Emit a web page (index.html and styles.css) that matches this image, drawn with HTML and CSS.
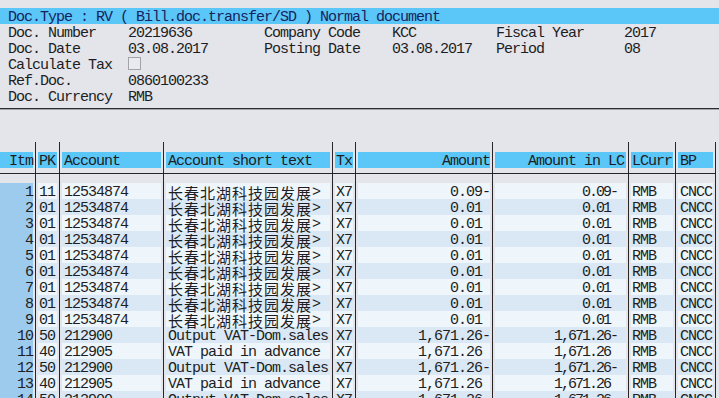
FILE: index.html
```html
<!DOCTYPE html>
<html lang="en">
<head>
    <meta charset="UTF-8">
    <title>Display Document: Data Entry View</title>

    <link rel="stylesheet" href="styles.css">
</head>
<body>

<div class="docHead">
    <div class="docHead__title">Doc.Type : RV ( Bill.doc.transfer/SD ) Normal document</div>
    <div class="docHead__grid">
        <span>Doc. Number</span><span>20219636</span><span>Company Code</span><span>KCC</span><span>Fiscal Year</span><span>2017</span>
        <span>Doc. Date</span><span>03.08.2017</span><span>Posting Date</span><span>03.08.2017</span><span>Period</span><span>08</span>
        <span>Calculate Tax</span><span class="docHead__wide"><i class="check"></i></span>
        <span>Ref.Doc.</span><span class="docHead__wide">0860100233</span>
        <span>Doc. Currency</span><span class="docHead__wide">RMB</span>
    </div>
</div>
<hr class="divider">

<div class="items"></div>

<script>
    window.onload = function () {

        const columns = ['itm', 'pk', 'acct', 'short', 'tx', 'amt', 'lc', 'curr', 'bp'];
        const titles = ['Itm', 'PK', 'Account', 'Account short text', 'Tx', 'Amount', 'Amount in LC', 'LCurr', 'BP'];
        const park = '<span class="zh">长春北湖科技园发展</span>&gt;';

        //строки документа
        let rows = [];
        for (let i = 1; i <= 14; i++) {
            let line;
            if (i === 1) {
                line = ['11', '12534874', park, '0.09-'];
            } else if (i < 10) {
                line = ['01', '12534874', park, '0.01 '];
            } else if (i % 2 === 0) {
                line = ['50', '212900', 'Output VAT-Dom.sales', '1,671.26-'];
            } else {
                line = ['40', '212905', 'VAT paid in advance', '1,671.26 '];
            }
            rows.push([i, line[0], line[1], line[2], 'X7', line[3], line[3], 'RMB', 'CNCC']);
        }

        let html = '';
        columns.forEach(function (name, c) {
            html += '<div class="col col--' + name + '">';
            html += '<div class="col__head">' + titles[c] + '</div><div class="col__rule"></div>';
            rows.forEach(function (row) {
                html += '<div class="cell">' + row[c] + '</div>';
            });
            html += '</div>';
        });

        document.querySelector('.items').innerHTML = html;
    }
</script>

</body>
</html>
```

FILE: styles.css
```css
html{
    overflow: hidden;
}
body{
    margin: 0;
    background-color: #e4e4eb;
    font-family: "Liberation Mono", monospace;
    font-size: 15px;
    letter-spacing: -1px;
    line-height: 16px;
    color: #1d1d24;
}
.docHead{
    padding-top: 8px;
}
.docHead__title{
    box-sizing: border-box;
    height: 16px;
    padding: 2px 0 0 8px;
    background-color: #5ac7f8;
    color: #17235f;
    white-space: pre;
}
.docHead__grid{
    display: grid;
    grid-template-columns: 120px 136px 128px 104px 128px 1fr;
    grid-auto-rows: 16px;
    padding-left: 8px;
    white-space: pre;
}
.docHead__grid span{
    padding-top: 2px;
}
.docHead__wide{
    grid-column: span 5;
}
.check{
    display: block;
    width: 11px;
    height: 11px;
    margin-top: -1px;
    border: 1px solid #a2a2aa;
    background-color: #e9e9ee;
}
.divider{
    margin: 4px 0 0;
    border: none;
    border-top: 1px solid #2b2b30;
    border-bottom: 1px solid #a4a4ac;
}
.items{
    display: flex;
    margin-top: 32px;
}
.col{
    flex: none;
    padding: 10px 2px 0;
    border-right: 1px solid #26262b;
}
.col:first-child{
    padding-left: 0;
}
.col__head,
.cell{
    box-sizing: border-box;
    height: 16px;
    padding-top: 2px;
    white-space: pre;
}
.col__head{
    background-color: #5ac7f8;
}
.col__rule{
    height: 1px;
    margin: 5px -3px 9px -2px;
    background-color: #26262b;
}
.col:first-child .col__rule{
    margin-left: 0;
}
.cell{
    background-color: #eef6fb;
}
.cell:nth-child(even){
    background-color: #d9e8f4;
}
.zh{
    display: inline-block;
    height: 16px;
    vertical-align: top;
    font-family: "Noto Sans CJK SC", sans-serif;
    font-size: 15px;
    letter-spacing: 1px;
}

/* колонки */
.col--itm{
    width: 33px;
    text-align: right;
}
.col--itm .cell{
    background-color: #9dcbee;
}
.col--pk{
    width: 19px;
    text-indent: 1px;
}
.col--acct{
    width: 99px;
    text-indent: 2px;
}
.col--short{
    width: 164px;
    text-indent: 2px;
}
.col--short .zh{
    text-indent: 0;
}
.col--tx{
    width: 18px;
    text-indent: 1px;
}
.col--amt{
    width: 132px;
    text-align: right;
}
.col--lc{
    width: 131px;
    text-align: right;
}
.col--lc .col__head{
    padding-right: 2px;
}
.col--lc .cell{
    padding-right: 9px;
    letter-spacing: -2px;
}
.col--curr{
    width: 42px;
    text-indent: 1px;
}
.col--bp{
    width: 35px;
    text-indent: 2px;
}
```
